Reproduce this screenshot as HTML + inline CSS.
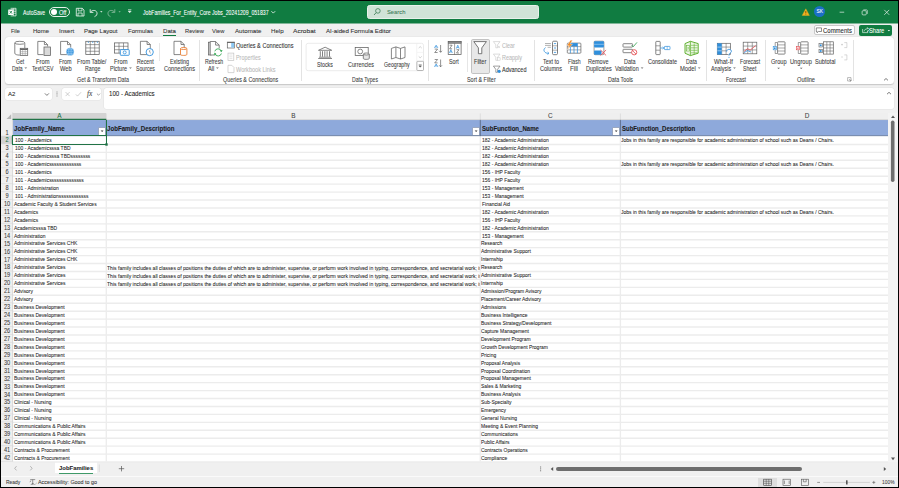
<!DOCTYPE html><html><head><meta charset="utf-8"><style>
html,body{margin:0;padding:0;}
body{width:899px;height:488px;overflow:hidden;position:relative;background:#f0f0f0;font-family:"Liberation Sans", sans-serif;}
.t{position:absolute;white-space:pre;line-height:1;-webkit-text-stroke:0.07px currentColor;}
.r{position:absolute;}
svg{position:absolute;left:0;top:0;}
</style></head><body><div class="r" style="left:0.00px;top:23.00px;width:899.00px;height:465.00px;background:#f0f0f0;"></div><div class="r" style="left:0.00px;top:0.00px;width:899.00px;height:23.00px;background:#107c41;"></div><div class="r" style="left:0.00px;top:23.00px;width:899.00px;height:1.00px;background:#80b698;"></div><div class="t" style="left:22.90px;top:10.00px;font-size:6.3px;color:#ffffff;font-weight:normal;transform:scaleX(0.8126);transform-origin:left center;">AutoSave</div><div class="r" style="left:48.9px;top:6.9px;width:21.1px;height:10px;border:0.8px solid #e8f2ec;border-radius:5px;box-sizing:border-box;"></div><div class="r" style="left:50.8px;top:8.8px;width:6.3px;height:6.3px;border-radius:50%;background:#fff;"></div><div class="t" style="left:59.38px;top:10.00px;font-size:6.3px;color:#ffffff;font-weight:normal;transform:scaleX(0.8929);transform-origin:left center;">Off</div><div class="t" style="left:143.00px;top:10.00px;font-size:6.3px;color:#ffffff;font-weight:normal;transform:scaleX(0.815);transform-origin:left center;">JobFamilies_For_Entity_Core Jobs_20241209_051837</div><div class="r" style="left:367px;top:4.8px;width:172px;height:14.3px;background:#d0e3d7;border:0.8px solid #e8f1eb;border-radius:2.5px;box-sizing:border-box;"></div><div class="t" style="left:386.66px;top:9.00px;font-size:6.0px;color:#3f7d58;font-weight:normal;transform:scaleX(0.9679);transform-origin:left center;">Search</div><div class="t" style="left:10.98px;top:28.00px;font-size:6.2px;color:#303030;font-weight:normal;transform:scaleX(0.8909);transform-origin:left center;">File</div><div class="t" style="left:32.56px;top:28.00px;font-size:6.2px;color:#303030;font-weight:normal;transform:scaleX(0.9674);transform-origin:left center;">Home</div><div class="t" style="left:58.55px;top:28.00px;font-size:6.2px;color:#303030;font-weight:normal;transform:scaleX(0.9803);transform-origin:left center;">Insert</div><div class="t" style="left:84.16px;top:28.00px;font-size:6.2px;color:#303030;font-weight:normal;transform:scaleX(0.965);transform-origin:left center;">Page Layout</div><div class="t" style="left:127.76px;top:28.00px;font-size:6.2px;color:#303030;font-weight:normal;transform:scaleX(0.9675);transform-origin:left center;">Formulas</div><div class="t" style="left:162.75px;top:28.00px;font-size:6.2px;color:#303030;font-weight:normal;transform:scaleX(0.985);transform-origin:left center;">Data</div><div class="t" style="left:184.57px;top:28.00px;font-size:6.2px;color:#303030;font-weight:normal;transform:scaleX(0.9248);transform-origin:left center;">Review</div><div class="t" style="left:212.47px;top:28.00px;font-size:6.2px;color:#303030;font-weight:normal;transform:scaleX(0.923);transform-origin:left center;">View</div><div class="t" style="left:235.05px;top:28.00px;font-size:6.2px;color:#303030;font-weight:normal;transform:scaleX(0.9948);transform-origin:left center;">Automate</div><div class="t" style="left:271.45px;top:28.00px;font-size:6.2px;color:#303030;font-weight:normal;transform:scaleX(0.9881);transform-origin:left center;">Help</div><div class="t" style="left:293.03px;top:28.00px;font-size:6.2px;color:#303030;font-weight:normal;transform:scaleX(1.0624);transform-origin:left center;">Acrobat</div><div class="t" style="left:326.45px;top:28.00px;font-size:6.2px;color:#303030;font-weight:normal;transform:scaleX(0.9928);transform-origin:left center;">AI-aided Formula Editor</div><div class="r" style="left:162.50px;top:34.60px;width:13.80px;height:1.20px;background:#107c41;"></div><div class="r" style="left:813.5px;top:25.2px;width:41.9px;height:10.1px;background:#fff;border:0.7px solid #c8c8c8;border-radius:2px;box-sizing:border-box;"></div><div class="t" style="left:823.16px;top:28.00px;font-size:6.3px;color:#262626;font-weight:normal;transform:scaleX(0.9489);transform-origin:left center;">Comments</div><div class="r" style="left:859.2px;top:24.9px;width:33px;height:10.7px;background:#107c41;border-radius:2px;"></div><div class="t" style="left:868.87px;top:28.00px;font-size:6.3px;color:#ffffff;font-weight:normal;transform:scaleX(0.9101);transform-origin:left center;">Share</div><div class="r" style="left:4.8px;top:37.4px;width:889px;height:46.6px;background:#fff;border-radius:3.5px;box-shadow:0 0.6px 1.2px rgba(0,0,0,0.18);"></div><div class="r" style="left:470.5px;top:39.4px;width:19.5px;height:35px;background:#e8e8e8;border:0.7px solid #c2c2c2;border-radius:1.8px;box-sizing:border-box;"></div><div class="t" style="left:76.79px;top:77.00px;font-size:6.3px;color:#3b3b3b;font-weight:normal;transform:scaleX(0.8487);transform-origin:left center;">Get &amp; Transform Data</div><div class="t" style="left:222.69px;top:77.00px;font-size:6.3px;color:#3b3b3b;font-weight:normal;transform:scaleX(0.8536);transform-origin:left center;">Queries &amp; Connections</div><div class="t" style="left:351.80px;top:77.00px;font-size:6.3px;color:#3b3b3b;font-weight:normal;transform:scaleX(0.8188);transform-origin:left center;">Data Types</div><div class="t" style="left:467.08px;top:77.00px;font-size:6.3px;color:#3b3b3b;font-weight:normal;transform:scaleX(0.863);transform-origin:left center;">Sort &amp; Filter</div><div class="t" style="left:607.69px;top:77.00px;font-size:6.3px;color:#3b3b3b;font-weight:normal;transform:scaleX(0.8431);transform-origin:left center;">Data Tools</div><div class="t" style="left:725.60px;top:77.00px;font-size:6.3px;color:#3b3b3b;font-weight:normal;transform:scaleX(0.812);transform-origin:left center;">Forecast</div><div class="t" style="left:796.77px;top:77.00px;font-size:6.3px;color:#3b3b3b;font-weight:normal;transform:scaleX(0.9017);transform-origin:left center;">Outline</div><div class="t" style="left:15.80px;top:59.00px;font-size:6.3px;color:#3b3b3b;font-weight:normal;transform:scaleX(0.8075);transform-origin:left center;">Get</div><div class="t" style="left:11.80px;top:66.00px;font-size:6.3px;color:#3b3b3b;font-weight:normal;transform:scaleX(0.7965);transform-origin:left center;">Data</div><div class="t" style="left:36.27px;top:59.00px;font-size:6.3px;color:#3b3b3b;font-weight:normal;transform:scaleX(0.9185);transform-origin:left center;">From</div><div class="t" style="left:32.20px;top:66.00px;font-size:6.3px;color:#3b3b3b;font-weight:normal;transform:scaleX(0.8188);transform-origin:left center;">Text/CSV</div><div class="t" style="left:59.39px;top:59.00px;font-size:6.3px;color:#3b3b3b;font-weight:normal;transform:scaleX(0.8573);transform-origin:left center;">From</div><div class="t" style="left:59.77px;top:66.00px;font-size:6.3px;color:#3b3b3b;font-weight:normal;transform:scaleX(0.9034);transform-origin:left center;">Web</div><div class="t" style="left:77.48px;top:59.00px;font-size:6.3px;color:#3b3b3b;font-weight:normal;transform:scaleX(0.887);transform-origin:left center;">From Table/</div><div class="t" style="left:84.79px;top:66.00px;font-size:6.3px;color:#3b3b3b;font-weight:normal;transform:scaleX(0.8295);transform-origin:left center;">Range</div><div class="t" style="left:114.47px;top:59.00px;font-size:6.3px;color:#3b3b3b;font-weight:normal;transform:scaleX(0.9185);transform-origin:left center;">From</div><div class="t" style="left:110.18px;top:66.00px;font-size:6.3px;color:#3b3b3b;font-weight:normal;transform:scaleX(0.867);transform-origin:left center;">Picture</div><div class="t" style="left:137.09px;top:59.00px;font-size:6.3px;color:#3b3b3b;font-weight:normal;transform:scaleX(0.8316);transform-origin:left center;">Recent</div><div class="t" style="left:135.90px;top:66.00px;font-size:6.3px;color:#3b3b3b;font-weight:normal;transform:scaleX(0.8178);transform-origin:left center;">Sources</div><div class="t" style="left:169.59px;top:59.00px;font-size:6.3px;color:#3b3b3b;font-weight:normal;transform:scaleX(0.8568);transform-origin:left center;">Existing</div><div class="t" style="left:163.68px;top:66.00px;font-size:6.3px;color:#3b3b3b;font-weight:normal;transform:scaleX(0.8851);transform-origin:left center;">Connections</div><div class="t" style="left:204.59px;top:59.00px;font-size:6.3px;color:#3b3b3b;font-weight:normal;transform:scaleX(0.8205);transform-origin:left center;">Refresh</div><div class="t" style="left:207.68px;top:66.00px;font-size:6.3px;color:#3b3b3b;font-weight:normal;transform:scaleX(0.8998);transform-origin:left center;">All</div><div class="t" style="left:316.89px;top:62.00px;font-size:6.3px;color:#3b3b3b;font-weight:normal;transform:scaleX(0.841);transform-origin:left center;">Stocks</div><div class="t" style="left:348.49px;top:62.00px;font-size:6.3px;color:#3b3b3b;font-weight:normal;transform:scaleX(0.8536);transform-origin:left center;">Currencies</div><div class="t" style="left:384.29px;top:62.00px;font-size:6.3px;color:#3b3b3b;font-weight:normal;transform:scaleX(0.8245);transform-origin:left center;">Geography</div><div class="t" style="left:449.39px;top:59.00px;font-size:6.3px;color:#3b3b3b;font-weight:normal;transform:scaleX(0.8482);transform-origin:left center;">Sort</div><div class="t" style="left:473.78px;top:59.00px;font-size:6.3px;color:#3b3b3b;font-weight:normal;transform:scaleX(0.8786);transform-origin:left center;">Filter</div><div class="t" style="left:542.98px;top:59.00px;font-size:6.3px;color:#3b3b3b;font-weight:normal;transform:scaleX(0.8621);transform-origin:left center;">Text to</div><div class="t" style="left:539.78px;top:66.00px;font-size:6.3px;color:#3b3b3b;font-weight:normal;transform:scaleX(0.885);transform-origin:left center;">Columns</div><div class="t" style="left:567.50px;top:59.00px;font-size:6.3px;color:#3b3b3b;font-weight:normal;transform:scaleX(0.8179);transform-origin:left center;">Flash</div><div class="t" style="left:569.95px;top:66.00px;font-size:6.3px;color:#3b3b3b;font-weight:normal;transform:scaleX(0.9817);transform-origin:left center;">Fill</div><div class="t" style="left:588.38px;top:59.00px;font-size:6.3px;color:#3b3b3b;font-weight:normal;transform:scaleX(0.8739);transform-origin:left center;">Remove</div><div class="t" style="left:585.68px;top:66.00px;font-size:6.3px;color:#3b3b3b;font-weight:normal;transform:scaleX(0.8737);transform-origin:left center;">Duplicates</div><div class="t" style="left:623.58px;top:59.00px;font-size:6.3px;color:#3b3b3b;font-weight:normal;transform:scaleX(0.8642);transform-origin:left center;">Data</div><div class="t" style="left:615.28px;top:66.00px;font-size:6.3px;color:#3b3b3b;font-weight:normal;transform:scaleX(0.8712);transform-origin:left center;">Validation</div><div class="t" style="left:647.78px;top:59.00px;font-size:6.3px;color:#3b3b3b;font-weight:normal;transform:scaleX(0.8716);transform-origin:left center;">Consolidate</div><div class="t" style="left:685.79px;top:59.00px;font-size:6.3px;color:#3b3b3b;font-weight:normal;transform:scaleX(0.8266);transform-origin:left center;">Data</div><div class="t" style="left:680.27px;top:66.00px;font-size:6.3px;color:#3b3b3b;font-weight:normal;transform:scaleX(0.9208);transform-origin:left center;">Model</div><div class="t" style="left:713.97px;top:59.00px;font-size:6.3px;color:#3b3b3b;font-weight:normal;transform:scaleX(0.9309);transform-origin:left center;">What-If</div><div class="t" style="left:711.29px;top:66.00px;font-size:6.3px;color:#3b3b3b;font-weight:normal;transform:scaleX(0.8568);transform-origin:left center;">Analysis</div><div class="t" style="left:739.69px;top:59.00px;font-size:6.3px;color:#3b3b3b;font-weight:normal;transform:scaleX(0.8201);transform-origin:left center;">Forecast</div><div class="t" style="left:743.30px;top:66.00px;font-size:6.3px;color:#3b3b3b;font-weight:normal;transform:scaleX(0.8078);transform-origin:left center;">Sheet</div><div class="t" style="left:770.78px;top:59.00px;font-size:6.3px;color:#3b3b3b;font-weight:normal;transform:scaleX(0.8909);transform-origin:left center;">Group</div><div class="t" style="left:790.37px;top:59.00px;font-size:6.3px;color:#3b3b3b;font-weight:normal;transform:scaleX(0.9021);transform-origin:left center;">Ungroup</div><div class="t" style="left:815.48px;top:59.00px;font-size:6.3px;color:#3b3b3b;font-weight:normal;transform:scaleX(0.8868);transform-origin:left center;">Subtotal</div><div class="t" style="left:236.18px;top:43.00px;font-size:6.3px;color:#303030;font-weight:normal;transform:scaleX(0.8876);transform-origin:left center;">Queries &amp; Connections</div><div class="t" style="left:236.29px;top:55.00px;font-size:6.3px;color:#b9b9b9;font-weight:normal;transform:scaleX(0.8567);transform-origin:left center;">Properties</div><div class="t" style="left:236.28px;top:67.00px;font-size:6.3px;color:#b9b9b9;font-weight:normal;transform:scaleX(0.8836);transform-origin:left center;">Workbook Links</div><div class="t" style="left:501.99px;top:43.00px;font-size:6.3px;color:#b9b9b9;font-weight:normal;transform:scaleX(0.8569);transform-origin:left center;">Clear</div><div class="t" style="left:501.78px;top:55.00px;font-size:6.3px;color:#b9b9b9;font-weight:normal;transform:scaleX(0.8653);transform-origin:left center;">Reapply</div><div class="t" style="left:502.28px;top:67.00px;font-size:6.3px;color:#303030;font-weight:normal;transform:scaleX(0.8743);transform-origin:left center;">Advanced</div><div class="r" style="left:199.40px;top:40.00px;width:0.80px;height:41.00px;background:#e3e3e3;"></div><div class="r" style="left:301.10px;top:40.00px;width:0.80px;height:41.00px;background:#e3e3e3;"></div><div class="r" style="left:428.40px;top:40.00px;width:0.80px;height:41.00px;background:#e3e3e3;"></div><div class="r" style="left:534.30px;top:40.00px;width:0.80px;height:41.00px;background:#e3e3e3;"></div><div class="r" style="left:706.20px;top:40.00px;width:0.80px;height:41.00px;background:#e3e3e3;"></div><div class="r" style="left:765.20px;top:40.00px;width:0.80px;height:41.00px;background:#e3e3e3;"></div><div class="r" style="left:853.30px;top:40.00px;width:0.80px;height:41.00px;background:#e3e3e3;"></div><div class="r" style="left:159.20px;top:43.00px;width:0.80px;height:18.00px;background:#e6e6e6;"></div><div class="r" style="left:466.90px;top:43.00px;width:0.80px;height:29.00px;background:#e6e6e6;"></div><div class="r" style="left:5.3px;top:88.4px;width:46.3px;height:11.3px;background:#fff;border-radius:2.5px;box-shadow:0 0 0 0.5px #e2e2e2;"></div><div class="t" style="left:8.00px;top:91.00px;font-size:6.0px;color:#262626;font-weight:normal;">A2</div><div class="r" style="left:61.9px;top:88.4px;width:39.5px;height:11.3px;background:#fff;border-radius:2.5px;box-shadow:0 0 0 0.5px #e2e2e2;"></div><div class="r" style="left:104.1px;top:88.4px;width:789.5px;height:20.5px;background:#fff;border-radius:2.5px;box-shadow:0 0 0 0.5px #e2e2e2;"></div><div class="t" style="left:108.90px;top:91.00px;font-size:6.3px;color:#262626;font-weight:normal;transform:scaleX(0.98);transform-origin:left center;">100 - Academics</div><div class="t" style="left:87px;top:89.6px;font-size:7.5px;font-family:'Liberation Serif',serif;font-style:italic;color:#444;">fx</div><div class="r" style="left:12.60px;top:119.60px;width:875.40px;height:341.94px;background:#ffffff;"></div><div class="r" style="left:12.60px;top:112.50px;width:875.40px;height:7.10px;background:#efefef;"></div><div class="r" style="left:12.60px;top:112.50px;width:93.70px;height:7.10px;background:#d3d3d3;"></div><div class="r" style="left:1.00px;top:112.50px;width:11.60px;height:349.04px;background:#efefef;"></div><div class="r" style="left:1.00px;top:136.00px;width:11.60px;height:7.94px;background:#d3d3d3;"></div><div class="r" style="left:12.60px;top:119.60px;width:875.40px;height:16.40px;background:#8ea9db;"></div><div class="t" style="left:49.45px;width:20px;text-align:center;top:113.00px;font-size:6.4px;color:#217346;font-weight:normal;">A</div><div class="t" style="left:283.30px;width:20px;text-align:center;top:113.00px;font-size:6.4px;color:#444444;font-weight:normal;">B</div><div class="t" style="left:540.35px;width:20px;text-align:center;top:113.00px;font-size:6.4px;color:#444444;font-weight:normal;">C</div><div class="t" style="left:797.00px;width:20px;text-align:center;top:113.00px;font-size:6.4px;color:#444444;font-weight:normal;">D</div><div class="t" style="left:0.20px;width:14px;text-align:center;top:129.00px;font-size:7.2px;color:#3a3a3a;font-weight:normal;transform:scaleX(0.78);transform-origin:center center;">1</div><div class="t" style="left:0.20px;width:14px;text-align:center;top:136.00px;font-size:7.2px;color:#217346;font-weight:normal;transform:scaleX(0.78);transform-origin:center center;">2</div><div class="t" style="left:0.20px;width:14px;text-align:center;top:144.00px;font-size:7.2px;color:#3a3a3a;font-weight:normal;transform:scaleX(0.78);transform-origin:center center;">3</div><div class="t" style="left:0.20px;width:14px;text-align:center;top:152.00px;font-size:7.2px;color:#3a3a3a;font-weight:normal;transform:scaleX(0.78);transform-origin:center center;">4</div><div class="t" style="left:0.20px;width:14px;text-align:center;top:160.00px;font-size:7.2px;color:#3a3a3a;font-weight:normal;transform:scaleX(0.78);transform-origin:center center;">5</div><div class="t" style="left:0.20px;width:14px;text-align:center;top:168.00px;font-size:7.2px;color:#3a3a3a;font-weight:normal;transform:scaleX(0.78);transform-origin:center center;">6</div><div class="t" style="left:0.20px;width:14px;text-align:center;top:176.00px;font-size:7.2px;color:#3a3a3a;font-weight:normal;transform:scaleX(0.78);transform-origin:center center;">7</div><div class="t" style="left:0.20px;width:14px;text-align:center;top:184.00px;font-size:7.2px;color:#3a3a3a;font-weight:normal;transform:scaleX(0.78);transform-origin:center center;">8</div><div class="t" style="left:0.20px;width:14px;text-align:center;top:192.00px;font-size:7.2px;color:#3a3a3a;font-weight:normal;transform:scaleX(0.78);transform-origin:center center;">9</div><div class="t" style="left:0.20px;width:14px;text-align:center;top:200.00px;font-size:7.2px;color:#3a3a3a;font-weight:normal;transform:scaleX(0.78);transform-origin:center center;">10</div><div class="t" style="left:0.20px;width:14px;text-align:center;top:208.00px;font-size:7.2px;color:#3a3a3a;font-weight:normal;transform:scaleX(0.78);transform-origin:center center;">11</div><div class="t" style="left:0.20px;width:14px;text-align:center;top:216.00px;font-size:7.2px;color:#3a3a3a;font-weight:normal;transform:scaleX(0.78);transform-origin:center center;">12</div><div class="t" style="left:0.20px;width:14px;text-align:center;top:224.00px;font-size:7.2px;color:#3a3a3a;font-weight:normal;transform:scaleX(0.78);transform-origin:center center;">13</div><div class="t" style="left:0.20px;width:14px;text-align:center;top:232.00px;font-size:7.2px;color:#3a3a3a;font-weight:normal;transform:scaleX(0.78);transform-origin:center center;">14</div><div class="t" style="left:0.20px;width:14px;text-align:center;top:240.00px;font-size:7.2px;color:#3a3a3a;font-weight:normal;transform:scaleX(0.78);transform-origin:center center;">15</div><div class="t" style="left:0.20px;width:14px;text-align:center;top:248.00px;font-size:7.2px;color:#3a3a3a;font-weight:normal;transform:scaleX(0.78);transform-origin:center center;">16</div><div class="t" style="left:0.20px;width:14px;text-align:center;top:256.00px;font-size:7.2px;color:#3a3a3a;font-weight:normal;transform:scaleX(0.78);transform-origin:center center;">17</div><div class="t" style="left:0.20px;width:14px;text-align:center;top:263.00px;font-size:7.2px;color:#3a3a3a;font-weight:normal;transform:scaleX(0.78);transform-origin:center center;">18</div><div class="t" style="left:0.20px;width:14px;text-align:center;top:271.00px;font-size:7.2px;color:#3a3a3a;font-weight:normal;transform:scaleX(0.78);transform-origin:center center;">19</div><div class="t" style="left:0.20px;width:14px;text-align:center;top:279.00px;font-size:7.2px;color:#3a3a3a;font-weight:normal;transform:scaleX(0.78);transform-origin:center center;">20</div><div class="t" style="left:0.20px;width:14px;text-align:center;top:287.00px;font-size:7.2px;color:#3a3a3a;font-weight:normal;transform:scaleX(0.78);transform-origin:center center;">21</div><div class="t" style="left:0.20px;width:14px;text-align:center;top:295.00px;font-size:7.2px;color:#3a3a3a;font-weight:normal;transform:scaleX(0.78);transform-origin:center center;">22</div><div class="t" style="left:0.20px;width:14px;text-align:center;top:303.00px;font-size:7.2px;color:#3a3a3a;font-weight:normal;transform:scaleX(0.78);transform-origin:center center;">23</div><div class="t" style="left:0.20px;width:14px;text-align:center;top:311.00px;font-size:7.2px;color:#3a3a3a;font-weight:normal;transform:scaleX(0.78);transform-origin:center center;">24</div><div class="t" style="left:0.20px;width:14px;text-align:center;top:319.00px;font-size:7.2px;color:#3a3a3a;font-weight:normal;transform:scaleX(0.78);transform-origin:center center;">25</div><div class="t" style="left:0.20px;width:14px;text-align:center;top:327.00px;font-size:7.2px;color:#3a3a3a;font-weight:normal;transform:scaleX(0.78);transform-origin:center center;">26</div><div class="t" style="left:0.20px;width:14px;text-align:center;top:335.00px;font-size:7.2px;color:#3a3a3a;font-weight:normal;transform:scaleX(0.78);transform-origin:center center;">27</div><div class="t" style="left:0.20px;width:14px;text-align:center;top:343.00px;font-size:7.2px;color:#3a3a3a;font-weight:normal;transform:scaleX(0.78);transform-origin:center center;">28</div><div class="t" style="left:0.20px;width:14px;text-align:center;top:351.00px;font-size:7.2px;color:#3a3a3a;font-weight:normal;transform:scaleX(0.78);transform-origin:center center;">29</div><div class="t" style="left:0.20px;width:14px;text-align:center;top:359.00px;font-size:7.2px;color:#3a3a3a;font-weight:normal;transform:scaleX(0.78);transform-origin:center center;">30</div><div class="t" style="left:0.20px;width:14px;text-align:center;top:367.00px;font-size:7.2px;color:#3a3a3a;font-weight:normal;transform:scaleX(0.78);transform-origin:center center;">31</div><div class="t" style="left:0.20px;width:14px;text-align:center;top:375.00px;font-size:7.2px;color:#3a3a3a;font-weight:normal;transform:scaleX(0.78);transform-origin:center center;">32</div><div class="t" style="left:0.20px;width:14px;text-align:center;top:383.00px;font-size:7.2px;color:#3a3a3a;font-weight:normal;transform:scaleX(0.78);transform-origin:center center;">33</div><div class="t" style="left:0.20px;width:14px;text-align:center;top:391.00px;font-size:7.2px;color:#3a3a3a;font-weight:normal;transform:scaleX(0.78);transform-origin:center center;">34</div><div class="t" style="left:0.20px;width:14px;text-align:center;top:398.00px;font-size:7.2px;color:#3a3a3a;font-weight:normal;transform:scaleX(0.78);transform-origin:center center;">35</div><div class="t" style="left:0.20px;width:14px;text-align:center;top:406.00px;font-size:7.2px;color:#3a3a3a;font-weight:normal;transform:scaleX(0.78);transform-origin:center center;">36</div><div class="t" style="left:0.20px;width:14px;text-align:center;top:414.00px;font-size:7.2px;color:#3a3a3a;font-weight:normal;transform:scaleX(0.78);transform-origin:center center;">37</div><div class="t" style="left:0.20px;width:14px;text-align:center;top:422.00px;font-size:7.2px;color:#3a3a3a;font-weight:normal;transform:scaleX(0.78);transform-origin:center center;">38</div><div class="t" style="left:0.20px;width:14px;text-align:center;top:430.00px;font-size:7.2px;color:#3a3a3a;font-weight:normal;transform:scaleX(0.78);transform-origin:center center;">39</div><div class="t" style="left:0.20px;width:14px;text-align:center;top:438.00px;font-size:7.2px;color:#3a3a3a;font-weight:normal;transform:scaleX(0.78);transform-origin:center center;">40</div><div class="t" style="left:0.20px;width:14px;text-align:center;top:446.00px;font-size:7.2px;color:#3a3a3a;font-weight:normal;transform:scaleX(0.78);transform-origin:center center;">41</div><div class="t" style="left:0.20px;width:14px;text-align:center;top:454.00px;font-size:7.2px;color:#3a3a3a;font-weight:normal;transform:scaleX(0.78);transform-origin:center center;">42</div><div class="t" style="left:13.96px;top:126.00px;font-size:6.4px;color:#1a1a1a;font-weight:bold;transform:scaleX(0.965);transform-origin:left center;">JobFamily_Name</div><div class="t" style="left:107.26px;top:126.00px;font-size:6.4px;color:#1a1a1a;font-weight:bold;transform:scaleX(0.9585);transform-origin:left center;">JobFamily_Description</div><div class="t" style="left:481.56px;top:126.00px;font-size:6.4px;color:#1a1a1a;font-weight:bold;transform:scaleX(0.9485);transform-origin:left center;">SubFunction_Name</div><div class="t" style="left:621.66px;top:126.00px;font-size:6.4px;color:#1a1a1a;font-weight:bold;transform:scaleX(0.9413);transform-origin:left center;">SubFunction_Description</div><div class="r" style="left:98.70px;top:128.2px;width:6.6px;height:6.4px;background:#fff;box-shadow:0 0 0 0.5px #a8a8a8;"></div><div class="r" style="left:472.70px;top:128.2px;width:6.6px;height:6.4px;background:#fff;box-shadow:0 0 0 0.5px #a8a8a8;"></div><div class="r" style="left:612.80px;top:128.2px;width:6.6px;height:6.4px;background:#fff;box-shadow:0 0 0 0.5px #a8a8a8;"></div><div class="t" style="left:14.60px;top:137.00px;font-size:6.1px;color:#262626;font-weight:normal;transform:scaleX(0.813);transform-origin:left center;">100 - Academics</div><div class="t" style="left:482.00px;top:137.00px;font-size:6.1px;color:#262626;font-weight:normal;transform:scaleX(0.813);transform-origin:left center;">182 - Academic Administration</div><div class="t" style="left:621.20px;top:137.00px;font-size:6.1px;color:#262626;font-weight:normal;transform:scaleX(0.818);transform-origin:left center;">Jobs in this family are responsible for academic administration of school such as Deans / Chairs.</div><div class="t" style="left:14.60px;top:145.00px;font-size:6.1px;color:#262626;font-weight:normal;transform:scaleX(0.813);transform-origin:left center;">100 - Academicsssa TBD</div><div class="t" style="left:482.00px;top:145.00px;font-size:6.1px;color:#262626;font-weight:normal;transform:scaleX(0.813);transform-origin:left center;">182 - Academic Administration</div><div class="t" style="left:14.60px;top:153.00px;font-size:6.1px;color:#262626;font-weight:normal;transform:scaleX(0.813);transform-origin:left center;">100 - Academicsssa TBDssssssss</div><div class="t" style="left:482.00px;top:153.00px;font-size:6.1px;color:#262626;font-weight:normal;transform:scaleX(0.813);transform-origin:left center;">182 - Academic Administration</div><div class="t" style="left:14.60px;top:161.00px;font-size:6.1px;color:#262626;font-weight:normal;transform:scaleX(0.813);transform-origin:left center;">100 - Academicsssssssssssss</div><div class="t" style="left:482.00px;top:161.00px;font-size:6.1px;color:#262626;font-weight:normal;transform:scaleX(0.813);transform-origin:left center;">182 - Academic Administration</div><div class="t" style="left:621.20px;top:161.00px;font-size:6.1px;color:#262626;font-weight:normal;transform:scaleX(0.818);transform-origin:left center;">Jobs in this family are responsible for academic administration of school such as Deans / Chairs.</div><div class="t" style="left:14.60px;top:169.00px;font-size:6.1px;color:#262626;font-weight:normal;transform:scaleX(0.813);transform-origin:left center;">101 - Academics</div><div class="t" style="left:482.00px;top:169.00px;font-size:6.1px;color:#262626;font-weight:normal;transform:scaleX(0.813);transform-origin:left center;">156 - IHP Faculty</div><div class="t" style="left:14.60px;top:177.00px;font-size:6.1px;color:#262626;font-weight:normal;transform:scaleX(0.813);transform-origin:left center;">101 - Academicssssssssssssss</div><div class="t" style="left:482.00px;top:177.00px;font-size:6.1px;color:#262626;font-weight:normal;transform:scaleX(0.813);transform-origin:left center;">156 - IHP Faculty</div><div class="t" style="left:14.60px;top:185.00px;font-size:6.1px;color:#262626;font-weight:normal;transform:scaleX(0.813);transform-origin:left center;">101 - Administration</div><div class="t" style="left:482.00px;top:185.00px;font-size:6.1px;color:#262626;font-weight:normal;transform:scaleX(0.813);transform-origin:left center;">153 - Management</div><div class="t" style="left:14.60px;top:193.00px;font-size:6.1px;color:#262626;font-weight:normal;transform:scaleX(0.813);transform-origin:left center;">101 - Administrationssssssssssss</div><div class="t" style="left:482.00px;top:193.00px;font-size:6.1px;color:#262626;font-weight:normal;transform:scaleX(0.813);transform-origin:left center;">153 - Management</div><div class="t" style="left:13.90px;top:201.00px;font-size:6.1px;color:#262626;font-weight:normal;transform:scaleX(0.813);transform-origin:left center;">Academic Faculty &amp; Student Services</div><div class="t" style="left:482.00px;top:201.00px;font-size:6.1px;color:#262626;font-weight:normal;transform:scaleX(0.813);transform-origin:left center;">Financial Aid</div><div class="t" style="left:13.90px;top:209.00px;font-size:6.1px;color:#262626;font-weight:normal;transform:scaleX(0.813);transform-origin:left center;">Academics</div><div class="t" style="left:482.00px;top:209.00px;font-size:6.1px;color:#262626;font-weight:normal;transform:scaleX(0.813);transform-origin:left center;">182 - Academic Administration</div><div class="t" style="left:621.20px;top:209.00px;font-size:6.1px;color:#262626;font-weight:normal;transform:scaleX(0.818);transform-origin:left center;">Jobs in this family are responsible for academic administration of school such as Deans / Chairs.</div><div class="t" style="left:13.90px;top:217.00px;font-size:6.1px;color:#262626;font-weight:normal;transform:scaleX(0.813);transform-origin:left center;">Academics</div><div class="t" style="left:482.00px;top:217.00px;font-size:6.1px;color:#262626;font-weight:normal;transform:scaleX(0.813);transform-origin:left center;">156 - IHP Faculty</div><div class="t" style="left:13.90px;top:225.00px;font-size:6.1px;color:#262626;font-weight:normal;transform:scaleX(0.813);transform-origin:left center;">Academicsssa TBD</div><div class="t" style="left:482.00px;top:225.00px;font-size:6.1px;color:#262626;font-weight:normal;transform:scaleX(0.813);transform-origin:left center;">182 - Academic Administration</div><div class="t" style="left:13.90px;top:233.00px;font-size:6.1px;color:#262626;font-weight:normal;transform:scaleX(0.813);transform-origin:left center;">Administration</div><div class="t" style="left:482.00px;top:233.00px;font-size:6.1px;color:#262626;font-weight:normal;transform:scaleX(0.813);transform-origin:left center;">153 - Management</div><div class="t" style="left:13.90px;top:240.00px;font-size:6.1px;color:#262626;font-weight:normal;transform:scaleX(0.813);transform-origin:left center;">Administrative Services CHK</div><div class="t" style="left:481.00px;top:240.00px;font-size:6.1px;color:#262626;font-weight:normal;transform:scaleX(0.813);transform-origin:left center;">Research</div><div class="t" style="left:13.90px;top:248.00px;font-size:6.1px;color:#262626;font-weight:normal;transform:scaleX(0.813);transform-origin:left center;">Administrative Services CHK</div><div class="t" style="left:481.00px;top:248.00px;font-size:6.1px;color:#262626;font-weight:normal;transform:scaleX(0.813);transform-origin:left center;">Administrative Support</div><div class="t" style="left:13.90px;top:256.00px;font-size:6.1px;color:#262626;font-weight:normal;transform:scaleX(0.813);transform-origin:left center;">Administrative Services CHK</div><div class="t" style="left:481.00px;top:256.00px;font-size:6.1px;color:#262626;font-weight:normal;transform:scaleX(0.813);transform-origin:left center;">Internship</div><div class="t" style="left:13.90px;top:264.00px;font-size:6.1px;color:#262626;font-weight:normal;transform:scaleX(0.813);transform-origin:left center;">Administrative Services</div><div class="t" style="left:481.00px;top:264.00px;font-size:6.1px;color:#262626;font-weight:normal;transform:scaleX(0.813);transform-origin:left center;">Research</div><div class="r" style="left:106.8px;top:263.04px;width:373.20px;height:7.94px;overflow:hidden;"><div class="t" style="left:0.7px;top:1.92px;font-size:6.1px;color:#262626;transform:scaleX(0.831);transform-origin:left center;">This family includes all classes of positions the duties of which are to administer, supervise, or perform work involved in typing, correspondence, and secretarial work; involved</div></div><div class="t" style="left:13.90px;top:272.00px;font-size:6.1px;color:#262626;font-weight:normal;transform:scaleX(0.813);transform-origin:left center;">Administrative Services</div><div class="t" style="left:481.00px;top:272.00px;font-size:6.1px;color:#262626;font-weight:normal;transform:scaleX(0.813);transform-origin:left center;">Administrative Support</div><div class="r" style="left:106.8px;top:270.98px;width:373.20px;height:7.94px;overflow:hidden;"><div class="t" style="left:0.7px;top:1.92px;font-size:6.1px;color:#262626;transform:scaleX(0.831);transform-origin:left center;">This family includes all classes of positions the duties of which are to administer, supervise, or perform work involved in typing, correspondence, and secretarial work; involved</div></div><div class="t" style="left:13.90px;top:280.00px;font-size:6.1px;color:#262626;font-weight:normal;transform:scaleX(0.813);transform-origin:left center;">Administrative Services</div><div class="t" style="left:481.00px;top:280.00px;font-size:6.1px;color:#262626;font-weight:normal;transform:scaleX(0.813);transform-origin:left center;">Internship</div><div class="r" style="left:106.8px;top:278.92px;width:373.20px;height:7.94px;overflow:hidden;"><div class="t" style="left:0.7px;top:1.92px;font-size:6.1px;color:#262626;transform:scaleX(0.831);transform-origin:left center;">This family includes all classes of positions the duties of which are to administer, supervise, or perform work involved in typing, correspondence, and secretarial work; involved</div></div><div class="t" style="left:13.90px;top:288.00px;font-size:6.1px;color:#262626;font-weight:normal;transform:scaleX(0.813);transform-origin:left center;">Advisory</div><div class="t" style="left:481.00px;top:288.00px;font-size:6.1px;color:#262626;font-weight:normal;transform:scaleX(0.813);transform-origin:left center;">Admission/Program Avisory</div><div class="t" style="left:13.90px;top:296.00px;font-size:6.1px;color:#262626;font-weight:normal;transform:scaleX(0.813);transform-origin:left center;">Advisory</div><div class="t" style="left:481.00px;top:296.00px;font-size:6.1px;color:#262626;font-weight:normal;transform:scaleX(0.813);transform-origin:left center;">Placement/Career Advisory</div><div class="t" style="left:13.90px;top:304.00px;font-size:6.1px;color:#262626;font-weight:normal;transform:scaleX(0.813);transform-origin:left center;">Business Development</div><div class="t" style="left:481.00px;top:304.00px;font-size:6.1px;color:#262626;font-weight:normal;transform:scaleX(0.813);transform-origin:left center;">Admissions</div><div class="t" style="left:13.90px;top:312.00px;font-size:6.1px;color:#262626;font-weight:normal;transform:scaleX(0.813);transform-origin:left center;">Business Development</div><div class="t" style="left:481.00px;top:312.00px;font-size:6.1px;color:#262626;font-weight:normal;transform:scaleX(0.813);transform-origin:left center;">Business Intelligence</div><div class="t" style="left:13.90px;top:320.00px;font-size:6.1px;color:#262626;font-weight:normal;transform:scaleX(0.813);transform-origin:left center;">Business Development</div><div class="t" style="left:481.00px;top:320.00px;font-size:6.1px;color:#262626;font-weight:normal;transform:scaleX(0.813);transform-origin:left center;">Business Strategy/Development</div><div class="t" style="left:13.90px;top:328.00px;font-size:6.1px;color:#262626;font-weight:normal;transform:scaleX(0.813);transform-origin:left center;">Business Development</div><div class="t" style="left:481.00px;top:328.00px;font-size:6.1px;color:#262626;font-weight:normal;transform:scaleX(0.813);transform-origin:left center;">Capture Management</div><div class="t" style="left:13.90px;top:336.00px;font-size:6.1px;color:#262626;font-weight:normal;transform:scaleX(0.813);transform-origin:left center;">Business Development</div><div class="t" style="left:481.00px;top:336.00px;font-size:6.1px;color:#262626;font-weight:normal;transform:scaleX(0.813);transform-origin:left center;">Development Program</div><div class="t" style="left:13.90px;top:344.00px;font-size:6.1px;color:#262626;font-weight:normal;transform:scaleX(0.813);transform-origin:left center;">Business Development</div><div class="t" style="left:481.00px;top:344.00px;font-size:6.1px;color:#262626;font-weight:normal;transform:scaleX(0.813);transform-origin:left center;">Growth Development Program</div><div class="t" style="left:13.90px;top:352.00px;font-size:6.1px;color:#262626;font-weight:normal;transform:scaleX(0.813);transform-origin:left center;">Business Development</div><div class="t" style="left:481.00px;top:352.00px;font-size:6.1px;color:#262626;font-weight:normal;transform:scaleX(0.813);transform-origin:left center;">Pricing</div><div class="t" style="left:13.90px;top:360.00px;font-size:6.1px;color:#262626;font-weight:normal;transform:scaleX(0.813);transform-origin:left center;">Business Development</div><div class="t" style="left:481.00px;top:360.00px;font-size:6.1px;color:#262626;font-weight:normal;transform:scaleX(0.813);transform-origin:left center;">Proposal Analysis</div><div class="t" style="left:13.90px;top:368.00px;font-size:6.1px;color:#262626;font-weight:normal;transform:scaleX(0.813);transform-origin:left center;">Business Development</div><div class="t" style="left:481.00px;top:368.00px;font-size:6.1px;color:#262626;font-weight:normal;transform:scaleX(0.813);transform-origin:left center;">Proposal Coordination</div><div class="t" style="left:13.90px;top:375.00px;font-size:6.1px;color:#262626;font-weight:normal;transform:scaleX(0.813);transform-origin:left center;">Business Development</div><div class="t" style="left:481.00px;top:375.00px;font-size:6.1px;color:#262626;font-weight:normal;transform:scaleX(0.813);transform-origin:left center;">Proposal Management</div><div class="t" style="left:13.90px;top:383.00px;font-size:6.1px;color:#262626;font-weight:normal;transform:scaleX(0.813);transform-origin:left center;">Business Development</div><div class="t" style="left:481.00px;top:383.00px;font-size:6.1px;color:#262626;font-weight:normal;transform:scaleX(0.813);transform-origin:left center;">Sales &amp; Marketing</div><div class="t" style="left:13.90px;top:391.00px;font-size:6.1px;color:#262626;font-weight:normal;transform:scaleX(0.813);transform-origin:left center;">Business Development</div><div class="t" style="left:481.00px;top:391.00px;font-size:6.1px;color:#262626;font-weight:normal;transform:scaleX(0.813);transform-origin:left center;">Business Analysis</div><div class="t" style="left:13.90px;top:399.00px;font-size:6.1px;color:#262626;font-weight:normal;transform:scaleX(0.813);transform-origin:left center;">Clinical - Nursing</div><div class="t" style="left:481.00px;top:399.00px;font-size:6.1px;color:#262626;font-weight:normal;transform:scaleX(0.813);transform-origin:left center;">Sub-Specialty</div><div class="t" style="left:13.90px;top:407.00px;font-size:6.1px;color:#262626;font-weight:normal;transform:scaleX(0.813);transform-origin:left center;">Clinical - Nursing</div><div class="t" style="left:481.00px;top:407.00px;font-size:6.1px;color:#262626;font-weight:normal;transform:scaleX(0.813);transform-origin:left center;">Emergency</div><div class="t" style="left:13.90px;top:415.00px;font-size:6.1px;color:#262626;font-weight:normal;transform:scaleX(0.813);transform-origin:left center;">Clinical - Nursing</div><div class="t" style="left:481.00px;top:415.00px;font-size:6.1px;color:#262626;font-weight:normal;transform:scaleX(0.813);transform-origin:left center;">General Nursing</div><div class="t" style="left:13.90px;top:423.00px;font-size:6.1px;color:#262626;font-weight:normal;transform:scaleX(0.813);transform-origin:left center;">Communications &amp; Public Affairs</div><div class="t" style="left:481.00px;top:423.00px;font-size:6.1px;color:#262626;font-weight:normal;transform:scaleX(0.813);transform-origin:left center;">Meeting &amp; Event Planning</div><div class="t" style="left:13.90px;top:431.00px;font-size:6.1px;color:#262626;font-weight:normal;transform:scaleX(0.813);transform-origin:left center;">Communications &amp; Public Affairs</div><div class="t" style="left:481.00px;top:431.00px;font-size:6.1px;color:#262626;font-weight:normal;transform:scaleX(0.813);transform-origin:left center;">Communications</div><div class="t" style="left:13.90px;top:439.00px;font-size:6.1px;color:#262626;font-weight:normal;transform:scaleX(0.813);transform-origin:left center;">Communications &amp; Public Affairs</div><div class="t" style="left:481.00px;top:439.00px;font-size:6.1px;color:#262626;font-weight:normal;transform:scaleX(0.813);transform-origin:left center;">Public Affairs</div><div class="t" style="left:13.90px;top:447.00px;font-size:6.1px;color:#262626;font-weight:normal;transform:scaleX(0.813);transform-origin:left center;">Contracts &amp; Procurement</div><div class="t" style="left:481.00px;top:447.00px;font-size:6.1px;color:#262626;font-weight:normal;transform:scaleX(0.813);transform-origin:left center;">Contracts Operations</div><div class="t" style="left:13.90px;top:455.00px;font-size:6.1px;color:#262626;font-weight:normal;transform:scaleX(0.813);transform-origin:left center;">Contracts &amp; Procurement</div><div class="t" style="left:481.00px;top:455.00px;font-size:6.1px;color:#262626;font-weight:normal;transform:scaleX(0.813);transform-origin:left center;">Compliance</div><div class="r" style="left:888.00px;top:112.50px;width:10.00px;height:349.04px;background:#f3f3f3;"></div><div class="r" style="left:1.00px;top:461.54px;width:898.00px;height:14.96px;background:#f0f0f0;"></div><div class="r" style="left:55.30px;top:461.54px;width:42.00px;height:11.60px;background:#ffffff;"></div><div class="t" style="left:58.65px;top:465.00px;font-size:6.0px;color:#262626;font-weight:bold;transform:scaleX(0.9862);transform-origin:left center;">JobFamilies</div><div class="r" style="left:59.00px;top:472.50px;width:34.20px;height:1.10px;background:#3f9a68;"></div><div class="r" style="left:1.00px;top:476.00px;width:898.00px;height:1.00px;background:#fafafa;"></div><div class="r" style="left:1.00px;top:477.00px;width:898.00px;height:9.50px;background:#f0f0f0;"></div><div class="t" style="left:5.69px;top:480.00px;font-size:5.9px;color:#3a3a3a;font-weight:normal;transform:scaleX(0.8385);transform-origin:left center;">Ready</div><div class="t" style="left:37.97px;top:480.00px;font-size:5.9px;color:#3a3a3a;font-weight:normal;transform:scaleX(0.9164);transform-origin:left center;">Accessibility: Good to go</div><div class="r" style="left:758.00px;top:477.50px;width:19.00px;height:9.00px;background:#dedede;"></div><div class="r" style="left:0.00px;top:0.00px;width:899.00px;height:1.00px;background:#000;"></div><div class="r" style="left:0.00px;top:0.00px;width:1.00px;height:488.00px;background:#000;"></div><div class="r" style="left:898.00px;top:0.00px;width:1.00px;height:488.00px;background:#000;"></div><svg width="899" height="488" viewBox="0 0 899 488"><path d="M24.40 67.50 h2.8 l-1.4 1.3 z" fill="#666"/><path d="M129.10 67.50 h2.8 l-1.4 1.3 z" fill="#666"/><path d="M216.00 67.50 h2.8 l-1.4 1.3 z" fill="#666"/><path d="M640.70 67.50 h2.8 l-1.4 1.3 z" fill="#666"/><path d="M697.80 67.50 h2.8 l-1.4 1.3 z" fill="#666"/><path d="M733.10 67.50 h2.8 l-1.4 1.3 z" fill="#666"/><path d="M777.20 67.70 h2.8 l-1.4 1.3 z" fill="#666"/><path d="M799.80 67.70 h2.8 l-1.4 1.3 z" fill="#666"/><line x1="12.6" y1="144.44" x2="888" y2="144.44" stroke="#ececec" stroke-width="1.4"/><line x1="12.6" y1="152.38" x2="888" y2="152.38" stroke="#ececec" stroke-width="1.4"/><line x1="12.6" y1="160.32" x2="888" y2="160.32" stroke="#ececec" stroke-width="1.4"/><line x1="12.6" y1="168.26" x2="888" y2="168.26" stroke="#ececec" stroke-width="1.4"/><line x1="12.6" y1="176.20" x2="888" y2="176.20" stroke="#ececec" stroke-width="1.4"/><line x1="12.6" y1="184.14" x2="888" y2="184.14" stroke="#ececec" stroke-width="1.4"/><line x1="12.6" y1="192.08" x2="888" y2="192.08" stroke="#ececec" stroke-width="1.4"/><line x1="12.6" y1="200.02" x2="888" y2="200.02" stroke="#ececec" stroke-width="1.4"/><line x1="12.6" y1="207.96" x2="888" y2="207.96" stroke="#ececec" stroke-width="1.4"/><line x1="12.6" y1="215.90" x2="888" y2="215.90" stroke="#ececec" stroke-width="1.4"/><line x1="12.6" y1="223.84" x2="888" y2="223.84" stroke="#ececec" stroke-width="1.4"/><line x1="12.6" y1="231.78" x2="888" y2="231.78" stroke="#ececec" stroke-width="1.4"/><line x1="12.6" y1="239.72" x2="888" y2="239.72" stroke="#ececec" stroke-width="1.4"/><line x1="12.6" y1="247.66" x2="888" y2="247.66" stroke="#ececec" stroke-width="1.4"/><line x1="12.6" y1="255.60" x2="888" y2="255.60" stroke="#ececec" stroke-width="1.4"/><line x1="12.6" y1="263.54" x2="888" y2="263.54" stroke="#ececec" stroke-width="1.4"/><line x1="12.6" y1="271.48" x2="888" y2="271.48" stroke="#ececec" stroke-width="1.4"/><line x1="12.6" y1="279.42" x2="888" y2="279.42" stroke="#ececec" stroke-width="1.4"/><line x1="12.6" y1="287.36" x2="888" y2="287.36" stroke="#ececec" stroke-width="1.4"/><line x1="12.6" y1="295.30" x2="888" y2="295.30" stroke="#ececec" stroke-width="1.4"/><line x1="12.6" y1="303.24" x2="888" y2="303.24" stroke="#ececec" stroke-width="1.4"/><line x1="12.6" y1="311.18" x2="888" y2="311.18" stroke="#ececec" stroke-width="1.4"/><line x1="12.6" y1="319.12" x2="888" y2="319.12" stroke="#ececec" stroke-width="1.4"/><line x1="12.6" y1="327.06" x2="888" y2="327.06" stroke="#ececec" stroke-width="1.4"/><line x1="12.6" y1="335.00" x2="888" y2="335.00" stroke="#ececec" stroke-width="1.4"/><line x1="12.6" y1="342.94" x2="888" y2="342.94" stroke="#ececec" stroke-width="1.4"/><line x1="12.6" y1="350.88" x2="888" y2="350.88" stroke="#ececec" stroke-width="1.4"/><line x1="12.6" y1="358.82" x2="888" y2="358.82" stroke="#ececec" stroke-width="1.4"/><line x1="12.6" y1="366.76" x2="888" y2="366.76" stroke="#ececec" stroke-width="1.4"/><line x1="12.6" y1="374.70" x2="888" y2="374.70" stroke="#ececec" stroke-width="1.4"/><line x1="12.6" y1="382.64" x2="888" y2="382.64" stroke="#ececec" stroke-width="1.4"/><line x1="12.6" y1="390.58" x2="888" y2="390.58" stroke="#ececec" stroke-width="1.4"/><line x1="12.6" y1="398.52" x2="888" y2="398.52" stroke="#ececec" stroke-width="1.4"/><line x1="12.6" y1="406.46" x2="888" y2="406.46" stroke="#ececec" stroke-width="1.4"/><line x1="12.6" y1="414.40" x2="888" y2="414.40" stroke="#ececec" stroke-width="1.4"/><line x1="12.6" y1="422.34" x2="888" y2="422.34" stroke="#ececec" stroke-width="1.4"/><line x1="12.6" y1="430.28" x2="888" y2="430.28" stroke="#ececec" stroke-width="1.4"/><line x1="12.6" y1="438.22" x2="888" y2="438.22" stroke="#ececec" stroke-width="1.4"/><line x1="12.6" y1="446.16" x2="888" y2="446.16" stroke="#ececec" stroke-width="1.4"/><line x1="12.6" y1="454.10" x2="888" y2="454.10" stroke="#ececec" stroke-width="1.4"/><line x1="12.6" y1="462.04" x2="888" y2="462.04" stroke="#ececec" stroke-width="1.4"/><line x1="106.3" y1="136.0" x2="106.3" y2="461.54" stroke="#ececec" stroke-width="1.3"/><line x1="480.3" y1="136.0" x2="480.3" y2="461.54" stroke="#ececec" stroke-width="1.3"/><line x1="620.4" y1="136.0" x2="620.4" y2="461.54" stroke="#ececec" stroke-width="1.3"/><line x1="12.6" y1="135.70" x2="888" y2="135.70" stroke="#6f7f99" stroke-width="0.8"/><line x1="106.3" y1="113.5" x2="106.3" y2="119.6" stroke="#d6d6d6" stroke-width="0.7"/><line x1="106.3" y1="119.6" x2="106.3" y2="136.0" stroke="#5a6a88" stroke-width="0.9"/><line x1="480.3" y1="113.5" x2="480.3" y2="119.6" stroke="#d6d6d6" stroke-width="0.7"/><line x1="480.3" y1="119.6" x2="480.3" y2="136.0" stroke="#5a6a88" stroke-width="0.9"/><line x1="620.4" y1="113.5" x2="620.4" y2="119.6" stroke="#d6d6d6" stroke-width="0.7"/><line x1="620.4" y1="119.6" x2="620.4" y2="136.0" stroke="#5a6a88" stroke-width="0.9"/><line x1="1" y1="136.00" x2="12.6" y2="136.00" stroke="#dcdcdc" stroke-width="0.7"/><line x1="1" y1="143.94" x2="12.6" y2="143.94" stroke="#dcdcdc" stroke-width="0.7"/><line x1="1" y1="151.88" x2="12.6" y2="151.88" stroke="#dcdcdc" stroke-width="0.7"/><line x1="1" y1="159.82" x2="12.6" y2="159.82" stroke="#dcdcdc" stroke-width="0.7"/><line x1="1" y1="167.76" x2="12.6" y2="167.76" stroke="#dcdcdc" stroke-width="0.7"/><line x1="1" y1="175.70" x2="12.6" y2="175.70" stroke="#dcdcdc" stroke-width="0.7"/><line x1="1" y1="183.64" x2="12.6" y2="183.64" stroke="#dcdcdc" stroke-width="0.7"/><line x1="1" y1="191.58" x2="12.6" y2="191.58" stroke="#dcdcdc" stroke-width="0.7"/><line x1="1" y1="199.52" x2="12.6" y2="199.52" stroke="#dcdcdc" stroke-width="0.7"/><line x1="1" y1="207.46" x2="12.6" y2="207.46" stroke="#dcdcdc" stroke-width="0.7"/><line x1="1" y1="215.40" x2="12.6" y2="215.40" stroke="#dcdcdc" stroke-width="0.7"/><line x1="1" y1="223.34" x2="12.6" y2="223.34" stroke="#dcdcdc" stroke-width="0.7"/><line x1="1" y1="231.28" x2="12.6" y2="231.28" stroke="#dcdcdc" stroke-width="0.7"/><line x1="1" y1="239.22" x2="12.6" y2="239.22" stroke="#dcdcdc" stroke-width="0.7"/><line x1="1" y1="247.16" x2="12.6" y2="247.16" stroke="#dcdcdc" stroke-width="0.7"/><line x1="1" y1="255.10" x2="12.6" y2="255.10" stroke="#dcdcdc" stroke-width="0.7"/><line x1="1" y1="263.04" x2="12.6" y2="263.04" stroke="#dcdcdc" stroke-width="0.7"/><line x1="1" y1="270.98" x2="12.6" y2="270.98" stroke="#dcdcdc" stroke-width="0.7"/><line x1="1" y1="278.92" x2="12.6" y2="278.92" stroke="#dcdcdc" stroke-width="0.7"/><line x1="1" y1="286.86" x2="12.6" y2="286.86" stroke="#dcdcdc" stroke-width="0.7"/><line x1="1" y1="294.80" x2="12.6" y2="294.80" stroke="#dcdcdc" stroke-width="0.7"/><line x1="1" y1="302.74" x2="12.6" y2="302.74" stroke="#dcdcdc" stroke-width="0.7"/><line x1="1" y1="310.68" x2="12.6" y2="310.68" stroke="#dcdcdc" stroke-width="0.7"/><line x1="1" y1="318.62" x2="12.6" y2="318.62" stroke="#dcdcdc" stroke-width="0.7"/><line x1="1" y1="326.56" x2="12.6" y2="326.56" stroke="#dcdcdc" stroke-width="0.7"/><line x1="1" y1="334.50" x2="12.6" y2="334.50" stroke="#dcdcdc" stroke-width="0.7"/><line x1="1" y1="342.44" x2="12.6" y2="342.44" stroke="#dcdcdc" stroke-width="0.7"/><line x1="1" y1="350.38" x2="12.6" y2="350.38" stroke="#dcdcdc" stroke-width="0.7"/><line x1="1" y1="358.32" x2="12.6" y2="358.32" stroke="#dcdcdc" stroke-width="0.7"/><line x1="1" y1="366.26" x2="12.6" y2="366.26" stroke="#dcdcdc" stroke-width="0.7"/><line x1="1" y1="374.20" x2="12.6" y2="374.20" stroke="#dcdcdc" stroke-width="0.7"/><line x1="1" y1="382.14" x2="12.6" y2="382.14" stroke="#dcdcdc" stroke-width="0.7"/><line x1="1" y1="390.08" x2="12.6" y2="390.08" stroke="#dcdcdc" stroke-width="0.7"/><line x1="1" y1="398.02" x2="12.6" y2="398.02" stroke="#dcdcdc" stroke-width="0.7"/><line x1="1" y1="405.96" x2="12.6" y2="405.96" stroke="#dcdcdc" stroke-width="0.7"/><line x1="1" y1="413.90" x2="12.6" y2="413.90" stroke="#dcdcdc" stroke-width="0.7"/><line x1="1" y1="421.84" x2="12.6" y2="421.84" stroke="#dcdcdc" stroke-width="0.7"/><line x1="1" y1="429.78" x2="12.6" y2="429.78" stroke="#dcdcdc" stroke-width="0.7"/><line x1="1" y1="437.72" x2="12.6" y2="437.72" stroke="#dcdcdc" stroke-width="0.7"/><line x1="1" y1="445.66" x2="12.6" y2="445.66" stroke="#dcdcdc" stroke-width="0.7"/><line x1="1" y1="453.60" x2="12.6" y2="453.60" stroke="#dcdcdc" stroke-width="0.7"/><line x1="1" y1="461.54" x2="12.6" y2="461.54" stroke="#dcdcdc" stroke-width="0.7"/><line x1="12.6" y1="112.5" x2="12.6" y2="461.54" stroke="#d0d0d0" stroke-width="0.7"/><line x1="12.6" y1="119.6" x2="888" y2="119.6" stroke="#d0d0d0" stroke-width="0.7"/><line x1="12.6" y1="119.39999999999999" x2="106.3" y2="119.39999999999999" stroke="#217346" stroke-width="1.1"/><line x1="12.4" y1="136.0" x2="12.4" y2="143.94" stroke="#217346" stroke-width="1.1"/><line x1="106.5" y1="120" x2="106.5" y2="136" stroke="#217346" stroke-width="1.0"/><rect x="12.5" y="135.5" width="94" height="9" fill="none" stroke="#217346" stroke-width="1.0"/><rect x="105.3" y="143.3" width="2.4" height="2.4" fill="#217346"/><path d="M100.70 130.6 h2.8 l-1.4 1.5 z" fill="#333"/><path d="M474.70 130.6 h2.8 l-1.4 1.5 z" fill="#333"/><path d="M614.80 130.6 h2.8 l-1.4 1.5 z" fill="#333"/><path d="M891 118 l2 -2.6 l2 2.6 z" fill="#555"/><rect x="890.9" y="120.5" width="3.6" height="61.5" rx="1.8" fill="#6e6e6e"/><path d="M891 457.6 l2 2.6 l2 -2.6 z" fill="#555"/><path d="M16.5 466.2 l-1.8 2.1 l1.8 2.1" fill="none" stroke="#9a9a9a" stroke-width="0.7"/><path d="M30.3 466.2 l1.8 2.1 l-1.8 2.1" fill="none" stroke="#9a9a9a" stroke-width="0.7"/><line x1="99.3" y1="464.5" x2="99.3" y2="472" stroke="#cfcfcf" stroke-width="0.6"/><path d="M121.5 466 v5.4 M118.8 468.7 h5.4" stroke="#555" stroke-width="0.7"/><rect x="540.2" y="466.55" width="0.9" height="0.9" fill="#555"/><rect x="540.2" y="468.45" width="0.9" height="0.9" fill="#555"/><rect x="540.2" y="470.35" width="0.9" height="0.9" fill="#555"/><path d="M553.2 466.9 l-2.5 2 l2.5 2 z" fill="#555"/><rect x="556" y="466.9" width="246" height="4" rx="2" fill="#6e6e6e"/><path d="M883.8 466.9 l2.4 2 l-2.4 2 z" fill="#555"/><path d="M10.6 8.3 h5.4 v7.6 h-5.4" fill="none" stroke="#fff" stroke-width="0.7"/><line x1="10.6" y1="9.9" x2="16" y2="9.9" stroke="#fff" stroke-width="0.6"/><line x1="10.6" y1="11.6" x2="16" y2="11.6" stroke="#fff" stroke-width="0.6"/><line x1="10.6" y1="13.3" x2="16" y2="13.3" stroke="#fff" stroke-width="0.6"/><line x1="13.3" y1="8.3" x2="13.3" y2="15.9" stroke="#fff" stroke-width="0.6"/><rect x="8.2" y="9.6" width="5.3" height="5.3" rx="0.5" fill="#fff"/><path d="M9.6 10.8 l2.5 2.9 M12.1 10.8 l-2.5 2.9" stroke="#107c41" stroke-width="0.8"/><path d="M76.3 8.3 h6 l1.7 1.7 v6 h-7.7 z" fill="none" stroke="#fff" stroke-width="0.75"/><path d="M78.2 8.3 v2.6 h3.8 v-2.6 M78 16 v-3 h4.1 v3" fill="none" stroke="#fff" stroke-width="0.7"/><path d="M90.2 9.2 v3.2 h3.2" fill="none" stroke="#fff" stroke-width="0.8"/><path d="M90.4 12.2 c1.5-2.3 5.6-2.5 6.5 0.3 c0.6 1.9-0.6 3.5-2.4 4.2" fill="none" stroke="#fff" stroke-width="0.8"/><path d="M100.1 11.3 h2.4 l-1.2 1.3 z" fill="#fff"/><path d="M114.8 9.2 v3.2 h-3.2" fill="none" stroke="#8fbfa2" stroke-width="0.8"/><path d="M114.6 12.2 c-1.5-2.3 -5.6-2.5 -6.5 0.3 c-0.6 1.9 0.6 3.5 2.4 4.2" fill="none" stroke="#8fbfa2" stroke-width="0.8"/><path d="M118.5 11.3 h2.2 l-1.1 1.2 z" fill="#8fbfa2"/><path d="M128 9.6 h3.4 M128.2 11 h3 l-1.5 1.8 z" fill="#dfeee5" stroke="#dfeee5" stroke-width="0.6"/><path d="M271.4 11.2 l1.9 1.9 l1.9 -1.9" fill="none" stroke="#fff" stroke-width="0.75"/><circle cx="377.9" cy="10.9" r="2.3" fill="none" stroke="#3f7d58" stroke-width="0.8"/><line x1="376.2" y1="12.6" x2="374" y2="15" stroke="#3f7d58" stroke-width="0.85"/><path d="M805.8 8.8 l3.6 6.6 h-7.2 z" fill="#f2b01e" stroke="#f2b01e" stroke-width="0.4" stroke-linejoin="round"/><path d="M805.8 11 v2.4 M805.8 14 v0.5" stroke="#3b2a00" stroke-width="0.6"/><line x1="839.6" y1="12.2" x2="844.2" y2="12.2" stroke="#e4efe8" stroke-width="0.7"/><rect x="862.1" y="10.7" width="4.2" height="4.2" rx="1" fill="none" stroke="#e4efe8" stroke-width="0.7"/><path d="M863.3 9.8 h3.1 a1 1 0 0 1 1 1 v3.1" fill="none" stroke="#e4efe8" stroke-width="0.6"/><path d="M884.3 9.9 l4.9 4.9 M889.2 9.9 l-4.9 4.9" stroke="#e4efe8" stroke-width="0.75"/><path d="M816.3 27.9 h5.2 v3.6 h-3.2 l-1.3 1.2 v-1.2 h-0.7 z" fill="none" stroke="#444" stroke-width="0.6"/><path d="M862.6 29 v3.6 h5.2 v-1.4 M864.1 31.4 c0.3-1.8 1.3-2.5 3.3-2.5 v-1.3 l2 2 l-2 2 v-1.2" fill="none" stroke="#fff" stroke-width="0.6"/><path d="M887.7 29.9 h2.4 l-1.2 1.3 z" fill="#fff"/><path d="M14.8 42.8 v10.4 c0 1.3 2.3 1.9 5 1.9" fill="none" stroke="#5f5f5f" stroke-width="0.75"/><path d="M24.8 42.8 v5.3" fill="none" stroke="#5f5f5f" stroke-width="0.75"/><ellipse cx="19.8" cy="42.8" rx="5" ry="1.5" fill="#fff" stroke="#5f5f5f" stroke-width="0.75"/><rect x="20.2" y="48.3" width="7.5" height="7.3" fill="#fff" stroke="#5f5f5f" stroke-width="0.75"/><line x1="20.2" y1="49.3" x2="27.7" y2="49.3" stroke="#5f5f5f" stroke-width="1.3"/><path d="M22.7 49.8 V55.6 M25.2 49.8 V55.6 M20.2 51.7 H27.7 M20.2 53.7 H27.7" stroke="#8c8c8c" stroke-width="0.5"/><path d="M37.8 41.4 H44.4 L47.6 44.6 V54.6 H37.8 Z" fill="#ffffff" stroke="#5f5f5f" stroke-width="0.75"/><path d="M44.4 41.4 V44.6 H47.6" fill="none" stroke="#5f5f5f" stroke-width="0.75"/><rect x="44" y="47" width="6.5" height="8.6" fill="#d9d9d9" stroke="#fff" stroke-width="1.2"/><rect x="44" y="47" width="6.5" height="8.6" fill="#d9d9d9" stroke="#5f5f5f" stroke-width="0.75"/><path d="M60.6 41.4 H67.5 L70.7 44.6 V54.6 H60.6 Z" fill="#ffffff" stroke="#5f5f5f" stroke-width="0.75"/><path d="M67.5 41.4 V44.6 H70.7" fill="none" stroke="#5f5f5f" stroke-width="0.75"/><circle cx="70.1" cy="51.7" r="4" fill="#2f8fdc" stroke="#fff" stroke-width="0.5"/><path d="M66.3 51.7 h7.6 M70.1 47.9 v7.6 M67 49.8 h6.2 M67 53.6 h6.2" stroke="#bfe0fb" stroke-width="0.4"/><ellipse cx="70.1" cy="51.7" rx="1.8" ry="3.8" fill="none" stroke="#bfe0fb" stroke-width="0.4"/><rect x="85.8" y="41.3" width="13.40" height="13.30" fill="#fff" stroke="#5f5f5f" stroke-width="0.75"/><line x1="90.27" y1="41.3" x2="90.27" y2="54.6" stroke="#5f5f5f" stroke-width="0.60"/><line x1="94.73" y1="41.3" x2="94.73" y2="54.6" stroke="#5f5f5f" stroke-width="0.60"/><line x1="85.8" y1="44.62" x2="99.2" y2="44.62" stroke="#5f5f5f" stroke-width="0.60"/><line x1="85.8" y1="47.95" x2="99.2" y2="47.95" stroke="#5f5f5f" stroke-width="0.60"/><line x1="85.8" y1="51.27" x2="99.2" y2="51.27" stroke="#5f5f5f" stroke-width="0.60"/><path d="M87.4 41.8 l0.9 1.1 l0.9 -1.1 z M91.9 41.8 l0.9 1.1 l0.9 -1.1 z M96.4 41.8 l0.9 1.1 l0.9 -1.1 z" fill="#2f8fdc"/><rect x="114.5" y="42.9" width="13.50" height="10.20" fill="#fff" stroke="#5f5f5f" stroke-width="0.75"/><line x1="119.00" y1="42.9" x2="119.00" y2="53.1" stroke="#5f5f5f" stroke-width="0.60"/><line x1="123.50" y1="42.9" x2="123.50" y2="53.1" stroke="#5f5f5f" stroke-width="0.60"/><line x1="114.5" y1="46.30" x2="128" y2="46.30" stroke="#5f5f5f" stroke-width="0.60"/><line x1="114.5" y1="49.70" x2="128" y2="49.70" stroke="#5f5f5f" stroke-width="0.60"/><rect x="120.3" y="49.6" width="8.9" height="5.7" rx="0.6" fill="#fff" stroke="#2f8fdc" stroke-width="0.9"/><circle cx="124.7" cy="52.4" r="1.5" fill="none" stroke="#2f8fdc" stroke-width="0.8"/><path d="M140.4 41.3 H147.10000000000002 L150.3 44.5 V54.6 H140.4 Z" fill="#ffffff" stroke="#5f5f5f" stroke-width="0.75"/><path d="M147.10000000000002 41.3 V44.5 H150.3" fill="none" stroke="#5f5f5f" stroke-width="0.75"/><circle cx="149.7" cy="52.1" r="3.6" fill="#fff" stroke="#2f8fdc" stroke-width="0.9"/><path d="M149.7 50.2 v2 l1.1 1" fill="none" stroke="#5f5f5f" stroke-width="0.6"/><path d="M174 41.3 H181.0 L184.2 44.5 V54.6 H174 Z" fill="#ffffff" stroke="#5f5f5f" stroke-width="0.75"/><path d="M181.0 41.3 V44.5 H184.2" fill="none" stroke="#5f5f5f" stroke-width="0.75"/><path d="M180.5 48.5 v5.8 c0 0.9 1.4 1.1 3.2 1.1 c1.8 0 3.2-0.2 3.2-1.1 v-5.8" fill="#fff" stroke="#e8792b" stroke-width="0.85"/><ellipse cx="183.7" cy="48.5" rx="3.2" ry="1" fill="#fff" stroke="#e8792b" stroke-width="0.85"/><rect x="208.4" y="42.2" width="2.6" height="12.8" fill="#d6d6d6" stroke="#5f5f5f" stroke-width="0.7"/><path d="M210.2 41.5 H215.6 L219.2 45.1 V55 H210.2 Z" fill="#fff" stroke="#5f5f5f" stroke-width="0.75"/><path d="M215.6 41.5 V45.1 H219.2" fill="none" stroke="#5f5f5f" stroke-width="0.75"/><circle cx="218.1" cy="52.4" r="4.3" fill="#fff"/><path d="M214.8 51.3 A3.4 3.4 0 0 1 221.3 51.1" fill="none" stroke="#3aa757" stroke-width="0.9"/><path d="M221.4 53.5 A3.4 3.4 0 0 1 214.9 53.7" fill="none" stroke="#3aa757" stroke-width="0.9"/><path d="M222.6 49.9 L221.4 52.2 L219.6 50.6 Z M213.6 54.9 L214.8 52.6 L216.6 54.2 Z" fill="#3aa757"/><rect x="227.3" y="42.1" width="7.3" height="5.9" fill="#fff" stroke="#5f5f5f" stroke-width="0.7"/><rect x="231.2" y="42.9" width="3" height="4.7" fill="#8cc8f3"/><line x1="227.3" y1="42.5" x2="234.6" y2="42.5" stroke="#5f5f5f" stroke-width="0.9"/><rect x="228" y="53.1" width="5.8" height="7.4" fill="none" stroke="#c4c4c4" stroke-width="0.7"/><path d="M229.4 55 h3 M229.4 56.8 h3 M229.4 58.6 h3" stroke="#c9c9c9" stroke-width="0.5"/><path d="M228 65.3 h3.8 l2.2 2.2 v5.1 h-6 z" fill="none" stroke="#c4c4c4" stroke-width="0.7"/><rect x="306.1" y="43.3" width="117.4" height="27.4" rx="2" fill="none" stroke="#e2e2e2" stroke-width="0.7"/><line x1="416.7" y1="43.3" x2="416.7" y2="70.7" stroke="#ececec" stroke-width="0.6"/><path d="M418.7 48 l1.5 -1.4 l1.5 1.4" fill="none" stroke="#a8a8a8" stroke-width="0.55"/><line x1="417" y1="52.4" x2="423.5" y2="52.4" stroke="#ececec" stroke-width="0.6"/><path d="M418.7 56.4 l1.5 1.4 l1.5 -1.4" fill="none" stroke="#a8a8a8" stroke-width="0.55"/><rect x="416.9" y="61.3" width="6.6" height="9.2" rx="0.8" fill="#fff" stroke="#8a8a8a" stroke-width="0.6"/><path d="M418.7 64.6 h3 M418.9 65.8 h2.6 l-1.3 1.4 z" fill="#555" stroke="#555" stroke-width="0.45"/><path d="M318.5 50.3 l6.6 -3.1 l6.6 3.1 z" fill="#fff" stroke="#5f5f5f" stroke-width="0.75"/><path d="M318.2 58.5 h13.8 M319 57.2 h12.2" stroke="#5f5f5f" stroke-width="0.75"/><path d="M320.3 51.2 v5.5 M322.5 51.2 v5.5 M324.8 51.2 v5.5 M327.1 51.2 v5.5 M329.5 51.2 v5.5" stroke="#5f5f5f" stroke-width="0.8"/><rect x="355.2" y="47.5" width="13" height="8" fill="#fff" stroke="#5f5f5f" stroke-width="0.75"/><circle cx="360.2" cy="51.5" r="2.4" fill="none" stroke="#5f5f5f" stroke-width="0.75"/><path d="M363.3 54 v4.3 c0 0.8 1.3 1.1 3 1.1 c1.7 0 3-0.3 3-1.1 v-4.3" fill="#e6e6e6" stroke="#5f5f5f" stroke-width="0.75"/><ellipse cx="366.3" cy="54" rx="3" ry="1" fill="#fff" stroke="#5f5f5f" stroke-width="0.75"/><path d="M391.4 48.4 l4.5 -1.5 l4.6 1.5 l4.5 -1.5 v10.6 l-4.5 1.5 l-4.6 -1.5 l-4.5 1.5 z" fill="#fff" stroke="#5f5f5f" stroke-width="0.75"/><path d="M395.9 46.9 v10.6 M400.5 48.4 v10.6" stroke="#5f5f5f" stroke-width="0.75"/><path d="M434.40 47.90 L436.15 45.20 L437.90 47.90 M435.17 46.98 H437.13" fill="none" stroke="#2f8fdc" stroke-width="0.7"/><path d="M434.70 49.10 H437.60 L434.70 52.50 H437.60" fill="none" stroke="#4a4a4a" stroke-width="0.6"/><path d="M440.6 45 v7.2 M439.2 50.8 l1.4 1.5 l1.4 -1.5" fill="none" stroke="#4a4a4a" stroke-width="0.6"/><path d="M434.70 59.50 H437.60 L434.70 62.90 H437.60" fill="none" stroke="#4a4a4a" stroke-width="0.6"/><path d="M434.40 66.90 L436.15 64.00 L437.90 66.90 M435.17 65.91 H437.13" fill="none" stroke="#2f8fdc" stroke-width="0.7"/><path d="M440.6 59.5 v7.2 M439.2 65.3 l1.4 1.5 l1.4 -1.5" fill="none" stroke="#4a4a4a" stroke-width="0.6"/><rect x="448.2" y="41.5" width="12.9" height="13.1" fill="#fff" stroke="#5f5f5f" stroke-width="0.75"/><rect x="448.2" y="41.5" width="12.9" height="1.9" fill="#8a8a8a" stroke="#5f5f5f" stroke-width="0.5"/><line x1="454.6" y1="43.4" x2="454.6" y2="54.6" stroke="#5f5f5f" stroke-width="0.6"/><path d="M449.60 45.20 H452.10 L449.60 48.80 H452.10" fill="none" stroke="#4a4a4a" stroke-width="0.6"/><path d="M449.40 53.00 L450.85 49.70 L452.30 53.00 M450.04 51.88 H451.66" fill="none" stroke="#2f8fdc" stroke-width="0.7"/><path d="M456.30 48.60 L457.75 45.20 L459.20 48.60 M456.94 47.44 H458.56" fill="none" stroke="#2f8fdc" stroke-width="0.7"/><path d="M456.50 49.70 H459.00 L456.50 53.00 H459.00" fill="none" stroke="#4a4a4a" stroke-width="0.6"/><path d="M473.8 41.6 h12.6 l-4.6 6.3 v5.8 h-3.4 v-5.8 z" fill="#fff" stroke="#5f5f5f" stroke-width="0.85"/><path d="M493.4 41.60 h6.6 l-2.4 3.2 v3 h-1.8 v-3 z" fill="#fff" stroke="#c4c4c4" stroke-width="0.6"/><path d="M497.8 45.8 l2.2 2.2 M500 45.8 l-2.2 2.2" stroke="#c4c4c4" stroke-width="0.5"/><path d="M493.4 54.10 h6.6 l-2.4 3.2 v3 h-1.8 v-3 z" fill="#fff" stroke="#c4c4c4" stroke-width="0.6"/><rect x="497.3" y="57.8" width="2.8" height="2.4" fill="#fff" stroke="#c4c4c4" stroke-width="0.5"/><path d="M493.4 66.10 h6.6 l-2.4 3.2 v3 h-1.8 v-3 z" fill="#fff" stroke="#5f5f5f" stroke-width="0.6"/><circle cx="499.2" cy="71.3" r="1.6" fill="#2f8fdc"/><path d="M545 43.5 h5.9 M545 45.4 h5.9 M547.6 47.3 h3.3" stroke="#8a8a8a" stroke-width="0.65"/><rect x="552.5" y="41.2" width="5" height="13.5" rx="1.2" fill="#fff" stroke="#5f5f5f" stroke-width="0.8"/><path d="M552.5 45.8 h5 M552.5 50.2 h5" stroke="#5f5f5f" stroke-width="0.5"/><path d="M553.9 43.6 h2.2 M553.9 48 h2.2 M553.9 52.4 h2.2" stroke="#2f8fdc" stroke-width="0.8"/><path d="M545.6 47.6 c-2.2 1.2 -2.2 3.8 0.2 5.2 c0.8 0.5 1.8 0.6 2.8 0.5" fill="none" stroke="#2f8fdc" stroke-width="0.8"/><path d="M547.6 52 l1.4 1.3 l-1.5 1.2" fill="none" stroke="#2f8fdc" stroke-width="0.7"/><rect x="567.3" y="43.1" width="13.6" height="10.1" rx="0.8" fill="#fff" stroke="#5f5f5f" stroke-width="0.7"/><rect x="570" y="43.1" width="7.4" height="3.3" fill="#2f8fdc"/><path d="M567.3 46.6 h13.6 M567.3 49.9 h13.6" stroke="#5f5f5f" stroke-width="0.5"/><path d="M570.4 46.4 v6.8 M574 46.4 v6.8 M577.4 43.1 v10.1" stroke="#2f8fdc" stroke-width="0.75"/><path d="M570.5 40.3 l-3.6 5.4 h2.4 l-2.1 4.4 l5.3 -6.1 h-2.5 l2.5 -3.7 z" fill="#f08a24" stroke="#fff" stroke-width="0.35"/><rect x="594.1" y="41.2" width="9.8" height="13.5" rx="0.9" fill="#fff" stroke="#5f5f5f" stroke-width="0.6"/><rect x="594.1" y="41.2" width="9.8" height="6.3" rx="0.9" fill="#2f8fdc"/><rect x="594.1" y="50.6" width="7.4" height="4.1" rx="0.6" fill="#2f8fdc"/><line x1="594.1" y1="44.3" x2="603.9" y2="44.3" stroke="#cfe6fa" stroke-width="0.5"/><path d="M600.5 50 l5.6 5.4 M606.1 50 l-5.6 5.4" stroke="#ee4b55" stroke-width="0.8"/><rect x="623" y="43.7" width="9.6" height="3.4" rx="0.6" fill="#fff" stroke="#5f5f5f" stroke-width="0.75"/><rect x="623" y="49.3" width="9.6" height="3.4" rx="0.6" fill="#fff" stroke="#5f5f5f" stroke-width="0.75"/><path d="M631.6 45.2 l1.6 1.6 l3.8 -4.4" fill="none" stroke="#3aa757" stroke-width="0.85"/><circle cx="634.2" cy="52.3" r="2.6" fill="#fff" stroke="#e5484d" stroke-width="0.85"/><line x1="632.5" y1="50.6" x2="635.9" y2="54" stroke="#e5484d" stroke-width="0.8"/><rect x="655.8" y="41.4" width="4.4" height="13.2" rx="0.6" fill="#fff" stroke="#5f5f5f" stroke-width="0.75"/><path d="M655.8 45.8 h4.4 M655.8 50.2 h4.4" stroke="#5f5f5f" stroke-width="0.6"/><path d="M660.2 48 h3.6" stroke="#2f8fdc" stroke-width="0.7"/><path d="M662.6 46.8 l1.3 1.2 l-1.3 1.2" fill="none" stroke="#2f8fdc" stroke-width="0.6"/><rect x="664.4" y="46.4" width="5.6" height="3.2" rx="0.5" fill="#fff" stroke="#2f8fdc" stroke-width="0.7"/><line x1="667.2" y1="46.4" x2="667.2" y2="49.6" stroke="#2f8fdc" stroke-width="0.5"/><path d="M685 43.6 l5.4 -2.3 l7.8 2.3 v9.6 l-7.8 2.4 l-5.4 -2.4 z" fill="#eef7e6" stroke="#62b132" stroke-width="1"/><path d="M690.4 41.3 v14.3" stroke="#62b132" stroke-width="0.8"/><path d="M691 45.3 h6.6 M691 47.8 h6.6 M691 50.3 h6.6 M691 52.8 h6.6 M694.2 43.4 v11" stroke="#62b132" stroke-width="0.6"/><rect x="686.6" y="45.4" width="3" height="5.6" fill="#fff" stroke="#62b132" stroke-width="0.6"/><path d="M687.2 46.6 l1.8 3.2 M689 46.6 l-1.8 3.2" stroke="#62b132" stroke-width="0.45"/><rect x="717.3" y="43.3" width="13.20" height="11.30" fill="#fff" stroke="#5f5f5f" stroke-width="0.7"/><line x1="721.70" y1="43.3" x2="721.70" y2="54.6" stroke="#5f5f5f" stroke-width="0.56"/><line x1="726.10" y1="43.3" x2="726.10" y2="54.6" stroke="#5f5f5f" stroke-width="0.56"/><line x1="717.3" y1="47.07" x2="730.5" y2="47.07" stroke="#5f5f5f" stroke-width="0.56"/><line x1="717.3" y1="50.83" x2="730.5" y2="50.83" stroke="#5f5f5f" stroke-width="0.56"/><rect x="717.3" y="43.3" width="4.4" height="11.3" fill="#2f8fdc"/><path d="M717.3 47.1 h4.4 M717.3 50.8 h4.4" stroke="#fff" stroke-width="0.5"/><path d="M726.6 51.6 c0-3 4.8-3 4.8 -0.2 c0 1.6 -2.4 1.7 -2.4 3.4 v0.8" fill="#fff" stroke="#2f8fdc" stroke-width="0.9"/><circle cx="729" cy="57.2" r="0.55" fill="#2f8fdc"/><rect x="743.2" y="42.2" width="13.60" height="11.60" fill="#fff" stroke="#5f5f5f" stroke-width="0.7"/><line x1="747.73" y1="42.2" x2="747.73" y2="53.8" stroke="#5f5f5f" stroke-width="0.56"/><line x1="752.27" y1="42.2" x2="752.27" y2="53.8" stroke="#5f5f5f" stroke-width="0.56"/><line x1="743.2" y1="46.07" x2="756.8" y2="46.07" stroke="#5f5f5f" stroke-width="0.56"/><line x1="743.2" y1="49.93" x2="756.8" y2="49.93" stroke="#5f5f5f" stroke-width="0.56"/><path d="M744 51.6 l3.5 -3 l2.6 1.6 l5.6 -4.6" fill="none" stroke="#e5484d" stroke-width="0.8"/><path d="M744 52.6 l3.5 -2 l3.5 1.4" fill="none" stroke="#2f8fdc" stroke-width="0.8"/><rect x="777.60" y="41.8" width="7.4" height="12.3" rx="0.6" fill="#fff" stroke="#5f5f5f" stroke-width="0.75"/><path d="M777.60 44.9 h7.4 M777.60 48 h7.4 M777.60 51 h7.4" stroke="#5f5f5f" stroke-width="0.55"/><path d="M777.00 42.5 h-1.8 v11 h1.8" fill="none" stroke="#5f5f5f" stroke-width="0.6"/><rect x="773.20" y="46.6" width="3.2" height="3.2" fill="#fff" stroke="#2f8fdc" stroke-width="0.6"/><rect x="774" y="47.4" width="1.6" height="1.6" fill="#2f8fdc"/><rect x="800.70" y="41.8" width="7.4" height="12.3" rx="0.6" fill="#fff" stroke="#5f5f5f" stroke-width="0.75"/><path d="M800.70 44.9 h7.4 M800.70 48 h7.4 M800.70 51 h7.4" stroke="#5f5f5f" stroke-width="0.55"/><path d="M800.10 42.5 h-1.8 v11 h1.8" fill="none" stroke="#5f5f5f" stroke-width="0.6"/><rect x="796.30" y="46.6" width="3.2" height="3.2" fill="#fff" stroke="#e5484d" stroke-width="0.6"/><path d="M797 47.3 l1.8 1.8 M798.8 47.3 l-1.8 1.8" stroke="#e5484d" stroke-width="0.5"/><rect x="823.6" y="41.8" width="9.70" height="12.30" fill="#fff" stroke="#5f5f5f" stroke-width="0.7"/><line x1="826.83" y1="41.8" x2="826.83" y2="54.1" stroke="#5f5f5f" stroke-width="0.56"/><line x1="830.07" y1="41.8" x2="830.07" y2="54.1" stroke="#5f5f5f" stroke-width="0.56"/><line x1="823.6" y1="44.88" x2="833.3" y2="44.88" stroke="#5f5f5f" stroke-width="0.56"/><line x1="823.6" y1="47.95" x2="833.3" y2="47.95" stroke="#5f5f5f" stroke-width="0.56"/><line x1="823.6" y1="51.02" x2="833.3" y2="51.02" stroke="#5f5f5f" stroke-width="0.56"/><rect x="819" y="43.6" width="3.4" height="3.4" fill="#fff" stroke="#5f5f5f" stroke-width="0.6"/><rect x="819" y="49.3" width="3.4" height="3.4" fill="#fff" stroke="#5f5f5f" stroke-width="0.6"/><rect x="819.8" y="44.4" width="1.8" height="1.8" fill="#2f8fdc"/><rect x="819.8" y="50.1" width="1.8" height="1.8" fill="#2f8fdc"/><path d="M844.3 42.6 h2.6 v5 h-2.6 M841.2 44.6 h1.7 M842 43.8 v1.6" fill="none" stroke="#bdbdbd" stroke-width="0.6"/><path d="M844.3 54.9 h2.6 v5 h-2.6 M841.2 57 h1.7" fill="none" stroke="#bdbdbd" stroke-width="0.6"/><path d="M847.6 77.6 h3.4 v3.4 h-3.4 z M849 79 l1.8 1.8 M851 79.6 v1.4 h-1.4" fill="none" stroke="#777" stroke-width="0.5"/><path d="M884 80.4 l2 -1.9 l2 1.9" fill="none" stroke="#444" stroke-width="0.7"/><path d="M44.9 93.4 l2 2 l2 -2" fill="none" stroke="#444" stroke-width="0.7"/><path d="M57 91.6 v5.6" stroke="#9a9a9a" stroke-width="1.1" stroke-dasharray="0.8 0.6"/><path d="M65.6 92.1 l4 4 M69.6 92.1 l-4 4" stroke="#b0b0b0" stroke-width="0.6"/><path d="M75.9 94.4 l1.6 1.7 l3.6 -3.9" fill="none" stroke="#b0b0b0" stroke-width="0.6"/><path d="M96.9 93.6 l1.6 1.6 l1.6 -1.6" fill="none" stroke="#666" stroke-width="0.6"/><path d="M887 94.2 l2 -1.9 l2 1.9" fill="none" stroke="#444" stroke-width="0.7"/><path d="M30.2 479.6 h5 M32.7 479.6 v5.4 M30.8 485 l1.9 -2 l1.9 2 M30.8 480.6 l-0.8 1.6" fill="none" stroke="#555" stroke-width="0.6"/><path d="M36.6 483 l-1.2 1.2" stroke="#555" stroke-width="0.5"/><rect x="763.7" y="479.2" width="7.60" height="6.20" fill="#e0e0e0" stroke="#444" stroke-width="0.6"/><line x1="766.23" y1="479.2" x2="766.23" y2="485.4" stroke="#444" stroke-width="0.48"/><line x1="768.77" y1="479.2" x2="768.77" y2="485.4" stroke="#444" stroke-width="0.48"/><line x1="763.7" y1="481.27" x2="771.3" y2="481.27" stroke="#444" stroke-width="0.48"/><line x1="763.7" y1="483.33" x2="771.3" y2="483.33" stroke="#444" stroke-width="0.48"/><rect x="783" y="479.2" width="7.6" height="6.2" fill="none" stroke="#555" stroke-width="0.6"/><path d="M784.4 480.6 v3.4 M789.2 480.6 v3.4" stroke="#555" stroke-width="0.6"/><rect x="801.4" y="479.2" width="7" height="6.2" fill="none" stroke="#555" stroke-width="0.6"/><path d="M803.4 479.2 v2.6 h2.8 v-2.6" fill="none" stroke="#555" stroke-width="0.6"/><line x1="817.2" y1="482.4" x2="820" y2="482.4" stroke="#555" stroke-width="0.6"/><line x1="823.3" y1="482.4" x2="869.8" y2="482.4" stroke="#bdbdbd" stroke-width="0.6"/><rect x="846" y="480.2" width="1.6" height="4.4" rx="0.4" fill="#555"/><path d="M872.3 482.4 h3 M873.8 480.9 v3" stroke="#555" stroke-width="0.6"/><path d="M11.2 114.3 V119 H6.5 Z" fill="#b4b4b4"/></svg><div class="r" style="left:0.00px;top:486.50px;width:899.00px;height:1.50px;background:#000;"></div><div class="r" style="left:814.1px;top:6.3px;width:11.2px;height:11.2px;border-radius:50%;background:#1b6fc6;"></div><div class="t" style="left:814.7px;top:9.5px;width:10px;text-align:center;font-size:4.8px;color:#fff;">SK</div><div class="t" style="left:882.20px;top:480.00px;font-size:5.3px;color:#444;font-weight:normal;transform:scaleX(0.92);transform-origin:left center;">100%</div></body></html>
